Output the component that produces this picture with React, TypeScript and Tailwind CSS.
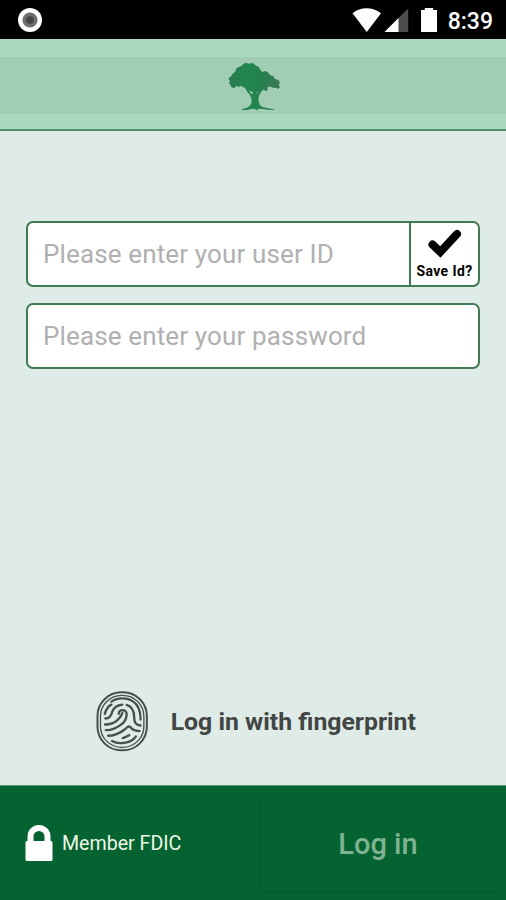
import type { ReactNode } from "react"

function StatusBar() {
  return (
    <div className="flex h-[39px] shrink-0 items-center justify-between bg-black pl-[18px] pr-[13px]">
      <svg viewBox="0 0 24 24" className="mt-[1px] size-6">
        <circle cx="12" cy="12" r="12" fill="#fff" />
        <circle cx="12" cy="12" r="7.6" fill="#6e6e6e" />
        <circle cx="12" cy="12" r="3.8" fill="#444" />
      </svg>
      <div className="flex items-center">
        <svg viewBox="0 0 86 26" className="mt-[1px] h-[26px] w-[86px]">
          <path d="M.5 6.2C8.5-.4 20.5-.4 29 6.2L14.8 25Z" fill="#fff" />
          <path d="M56.2 1.5V25H32.5Z" fill="#4d4d4d" />
          <path d="M46.5 11V25H32.5Z" fill="#fff" />
          <path d="M69 3h3.800V1h8.400v2H85v22H69Z" fill="#fff" />
        </svg>
        <span className="ml-[10px] mt-[4px] text-[23px] font-medium leading-none text-white">8:39</span>
      </div>
    </div>
  )
}

function TreeLogo() {
  return (
    <svg viewBox="38 23 160 147" className="h-[49px] w-[53.3px]">
      <defs>
        <linearGradient id="leaves" gradientUnits="userSpaceOnUse" x1="38" y1="0" x2="196" y2="0">
          <stop offset="0" stopColor="#2b7a50" />
          <stop offset=".4" stopColor="#21874d" />
          <stop offset=".75" stopColor="#2b7d4e" />
          <stop offset="1" stopColor="#407758" />
        </linearGradient>
      </defs>
      <path
        fill="url(#leaves)"
        d="M39 72L46 67L52 58L60 52L62 43L70 38L78 35L84 29L92 25L100 28L108 26L116 28L122 34L130 37L135 46L141 53L150 50L158 54L164 62L174 66L179 74L190 77L194 85L190 91L194 97L190 104L183 101L173 100L163 96L156 100L157 107L151 111L146 105L138 110L128 114L114 114L104 110L93 102L84 99L77 94L69 98L64 94L56 102L48 98L46 92L41 88L44 81Z"
      />
      <path
        fill="url(#leaves)"
        d="M88 98L97 100L105 115L111 120L114 111L122 111L125 117L134 106L144 106L135 116L130 128L130 142L134 153L143 159L158 162L176 165L177 167L158 166L142 164L130 163L124 168L117 163L107 164L96 167L79 167L80 164L93 161L103 155L108 147L109 134L104 122L96 113Z"
      />
    </svg>
  )
}

function FingerprintIcon() {
  return (
    <svg viewBox="34 32 158 184" className="h-[61px] w-[52.7px]" fill="none" stroke="#46504c" strokeWidth="7" strokeLinecap="round">
      <rect x="38" y="36" width="149" height="175" rx="72" strokeWidth="6" />
      <rect x="47" y="45" width="131" height="157" rx="64" strokeWidth="4" />
      <path d="M80 64C98 51 128 51 146 64C164 76 168 94 168 118" />
      <path d="M60 101C64 86 70 78 80 73" />
      <path d="M62 115C76 115 80 105 83 93C87 83 97 75 113 73" />
      <path d="M126 74C145 79 149 94 149 114C149 128 155 135 168 136" />
      <path d="M102 101C103 86 124 86 126 101C126 117 119 127 107 135C96 143 79 151 63 150" />
      <path d="M61 133C84 134 96 124 105 113C110 107 111 103 113 98" />
      <path d="M70 167C93 167 107 158 120 148C127 142 131 136 136 140C143 149 152 153 165 153" />
      <path d="M114 174C122 173 128 168 134 165" />
      <path d="M82 183C98 193 138 193 154 169" />
    </svg>
  )
}

function Field({ label, children }: { label: string; children?: ReactNode }) {
  return (
    <div className="flex h-[66px] overflow-hidden rounded-[7px] border-2 border-[#3f7a52] bg-white">
      <div className="flex flex-1 items-center whitespace-nowrap pl-[15px] text-[26px] leading-none tracking-[0.14px] text-[#b0b0b0]">
        {label}
      </div>
      {children}
    </div>
  )
}

export default function App() {
  return (
    <main className="flex h-[900px] w-full flex-col overflow-hidden bg-[#dfebe7] font-['Roboto',sans-serif]">
      <StatusBar />
      <header className="flex h-[92px] shrink-0 flex-col border-b-2 border-[#578c6e] bg-[#a9dabd] pt-[18px]">
        <div className="flex h-[57px] items-center justify-center bg-[#a2cdb5] pl-[3px] pt-[2px]">
          <TreeLogo />
        </div>
      </header>

      <section className="flex flex-col gap-4 px-[26px] pt-[90px]">
        <Field label="Please enter your user ID">
          <div className="flex w-[69px] flex-col items-center border-l-2 border-[#3c7a50]">
            <svg viewBox="0 0 34 30" className="mt-[6px] h-[30px] w-[34px]">
              <path d="M4.5 15.5L12.3 23L29 5" fill="none" stroke="#000" strokeWidth="8" strokeLinecap="round" />
            </svg>
            <span className="mt-[5px] whitespace-nowrap text-[14px] font-bold leading-none tracking-[0.4px] text-black">Save Id?</span>
          </div>
        </Field>
        <Field label="Please enter your password" />
      </section>

      <div className="mt-auto flex items-center pb-[33px] pl-[96px]">
        <FingerprintIcon />
        <span className="ml-[22px] mt-[2px] whitespace-nowrap text-[24.8px] font-bold leading-none text-[#414644]">
          Log in with fingerprint
        </span>
      </div>

      <footer className="flex h-[115px] shrink-0 border-t border-[#5f9576] bg-[#056331]">
        <div className="flex w-[259px] items-center pl-[25px]">
          <svg viewBox="0 0 28 37" className="h-[37px] w-7">
            <path d="M5.5 18V11.5a8.500 8.500 0 0 1 17 0V18" fill="none" stroke="#fff" strokeWidth="6" />
            <rect x=".5" y="16" width="27" height="20" rx="1.5" fill="#fff" />
          </svg>
          <span className="ml-[9px] mt-[2px] whitespace-nowrap text-[19.6px] leading-none text-[#eef7e6]">Member FDIC</span>
        </div>
        <div className="mb-[8px] mr-[10px] mt-[12px] flex flex-1 items-center justify-center border-b border-l border-[#045a2b] text-[29px] font-medium leading-none text-[#7fb291]">
          Log in
        </div>
      </footer>
    </main>
  )
}
